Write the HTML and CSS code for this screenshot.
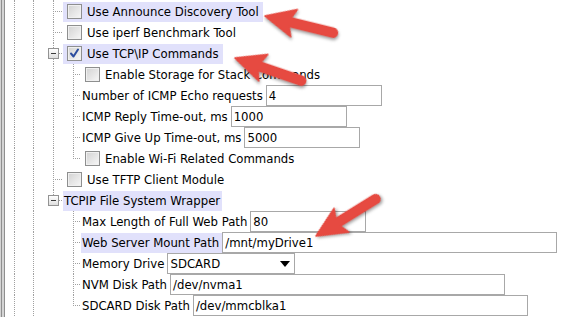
FILE: index.html
```html
<!DOCTYPE html>
<html>
<head>
    <meta charset="UTF-8">
    <title>TCP/IP Configuration</title>
    <link rel="stylesheet" href="styles.css">
</head>
<body>
    <div class="tree">
        <div class="row stub">
            <span class="g g1 pipe"></span><span class="g g2 pipe"></span><span class="g g3 pipe"></span>
        </div>
        <div class="row">
            <span class="g g1 pipe"></span><span class="g g2 pipe"></span><span class="g g3 tee"></span>
            <span class="label check hl"><span class="cb"></span>Use Announce Discovery Tool</span>
        </div>
        <div class="row">
            <span class="g g1 pipe"></span><span class="g g2 pipe"></span><span class="g g3 tee"></span>
            <span class="label check"><span class="cb"></span>Use iperf Benchmark Tool</span>
        </div>
        <div class="row">
            <span class="g g1 pipe"></span><span class="g g2 pipe"></span><span class="g g3 tee"><span class="toggle"></span></span>
            <span class="label check hl"><span class="cb checked"><svg viewBox="0 0 13 13"><path d="M3 6.5 L5.5 9.5 L10 2.5"/></svg></span>Use TCP\IP Commands</span>
        </div>
        <div class="row">
            <span class="g g1 pipe"></span><span class="g g2 pipe"></span><span class="g g3 pipe"></span><span class="g g4 tee"></span>
            <span class="label check"><span class="cb"></span>Enable Storage for Stack Commands</span>
        </div>
        <div class="row">
            <span class="g g1 pipe"></span><span class="g g2 pipe"></span><span class="g g3 pipe"></span><span class="g g4 tee"></span>
            <span class="label">Number of ICMP Echo requests</span><span class="field short">4</span>
        </div>
        <div class="row">
            <span class="g g1 pipe"></span><span class="g g2 pipe"></span><span class="g g3 pipe"></span><span class="g g4 tee"></span>
            <span class="label">ICMP Reply Time-out, ms</span><span class="field short">1000</span>
        </div>
        <div class="row">
            <span class="g g1 pipe"></span><span class="g g2 pipe"></span><span class="g g3 pipe"></span><span class="g g4 tee"></span>
            <span class="label">ICMP Give Up Time-out, ms</span><span class="field short">5000</span>
        </div>
        <div class="row">
            <span class="g g1 pipe"></span><span class="g g2 pipe"></span><span class="g g3 pipe"></span><span class="g g4 elbow"></span>
            <span class="label check"><span class="cb"></span>Enable Wi-Fi Related Commands</span>
        </div>
        <div class="row">
            <span class="g g1 pipe"></span><span class="g g2 pipe"></span><span class="g g3 tee"></span>
            <span class="label check"><span class="cb"></span>Use TFTP Client Module</span>
        </div>
        <div class="row">
            <span class="g g1 pipe"></span><span class="g g2 pipe"></span><span class="g g3 elbow"><span class="toggle"></span></span>
            <span class="label group hl">TCPIP File System Wrapper</span>
        </div>
        <div class="row">
            <span class="g g1 pipe"></span><span class="g g2 pipe"></span><span class="g g3"></span><span class="g g4 tee"></span>
            <span class="label">Max Length of Full Web Path</span><span class="field short">80</span>
        </div>
        <div class="row">
            <span class="g g1 pipe"></span><span class="g g2 pipe"></span><span class="g g3"></span><span class="g g4 tee"></span>
            <span class="label hl">Web Server Mount Path</span><span class="field long">/mnt/myDrive1</span>
        </div>
        <div class="row">
            <span class="g g1 pipe"></span><span class="g g2 pipe"></span><span class="g g3"></span><span class="g g4 tee"></span>
            <span class="label">Memory Drive</span><span class="field select">SDCARD<span class="caret"></span></span>
        </div>
        <div class="row">
            <span class="g g1 pipe"></span><span class="g g2 pipe"></span><span class="g g3"></span><span class="g g4 tee"></span>
            <span class="label">NVM Disk Path</span><span class="field long">/dev/nvma1</span>
        </div>
        <div class="row">
            <span class="g g1 pipe"></span><span class="g g2 pipe"></span><span class="g g3"></span><span class="g g4 elbow"></span>
            <span class="label">SDCARD Disk Path</span><span class="field long">/dev/mmcblka1</span>
        </div>
    </div>

    <!-- callout arrows drawn over the tree -->
    <svg class="arrows" viewBox="0 0 565 317">
        <g transform="translate(265,16) rotate(13.8)"><path d="M0,0 L30,-14 L26,-4.5 L70,-4.5 A4.5,4.5 0 0 1 70,4.5 L26,4.5 L30,14 Z"/></g>
        <g transform="translate(235,58) rotate(18.9)"><path d="M0,0 L30,-14 L26,-4.5 L70,-4.5 A4.5,4.5 0 0 1 70,4.5 L26,4.5 L30,14 Z"/></g>
        <g transform="translate(316,236) rotate(-31.8)"><path d="M0,0 L30,-14 L26,-4.5 L70,-4.5 A4.5,4.5 0 0 1 70,4.5 L26,4.5 L30,14 Z"/></g>
    </svg>
</body>
</html>
```

FILE: styles.css
```css
html, body {
    margin: 0;
    height: 100%;
}
body {
    position: relative;
    width: 565px;
    height: 317px;
    overflow: hidden;
    background: linear-gradient(to right, #d4d4d4 0 1px, #8f8f8f 1px 2px, #d4d4d4 2px 4px, #8f8f8f 4px 5px, #fff 5px);
    font-family: "DejaVu Sans Condensed", "DejaVu Sans", sans-serif;
    font-size: 13px;
    color: #000;
}
.tree {
    padding-left: 5px;
}
.row {
    display: flex;
    align-items: center;
    height: 21px;
    white-space: nowrap;
}
.row.stub {
    height: 1px;
}
.g {
    position: relative;
    flex: none;
    align-self: stretch;
    display: flex;
    align-items: center;
}
.g1 { width: 19px; --x: 9px; }
.g2 { width: 19px; --x: 9px; }
.g3 { width: 20px; --x: 10px; }
.g4 { width: 18px; --x: 10px; }

/* dotted tree lines */
.pipe::before,
.tee::before,
.elbow::before {
    content: "";
    position: absolute;
    left: var(--x);
    top: 0;
    bottom: 0;
    width: 1px;
    background: repeating-linear-gradient(to bottom, #a0a0a0 0 1px, transparent 1px 2px);
}
.elbow::before {
    bottom: auto;
    height: 11px;
}
.tee::after,
.elbow::after {
    content: "";
    position: absolute;
    left: var(--x);
    right: 0;
    top: 10px;
    height: 1px;
    background: repeating-linear-gradient(to right, #a0a0a0 0 1px, transparent 1px 2px);
}
.toggle {
    position: relative;
    z-index: 1;
    box-sizing: border-box;
    width: 11px;
    height: 11px;
    margin-left: 5px;
    margin-top: -1px;
    border: 1px solid #939393;
    background: linear-gradient(#ffffff, #dedede);
}
.toggle::before {
    content: "";
    position: absolute;
    left: 2px;
    top: 4px;
    width: 5px;
    height: 1px;
    background: #3a3a3a;
}

.label {
    display: flex;
    align-items: center;
    height: 20px;
    padding: 0 3px 0 1px;
    line-height: 20px;
}
.label.check {
    padding: 0 4px 0 4px;
}
.label.group {
    padding: 0 2px 0 1px;
}
.hl {
    background: #e1e1fb;
}
.cb {
    box-sizing: border-box;
    width: 15px;
    height: 15px;
    margin-right: 5px;
    border: 1px solid #8e8f8f;
    background: linear-gradient(135deg, #d2d2d2, #f7f7f7);
    box-shadow: inset 0 0 0 1px #f0f0f0;
    flex: none;
}
.cb svg {
    display: block;
    width: 13px;
    height: 13px;
}
.cb path {
    fill: none;
    stroke: #2b4c9e;
    stroke-width: 2;
    stroke-linecap: round;
    stroke-linejoin: round;
}

.field {
    box-sizing: border-box;
    height: 21px;
    line-height: 19px;
    padding-left: 2px;
    border: 1px solid #a8a8a8;
    background: #fff;
    flex: none;
}
.field.short { width: 116px; }
.field.long { width: 335px; }
.field.select {
    display: flex;
    align-items: center;
    justify-content: space-between;
    width: 128px;
    padding-right: 4px;
}
.caret {
    width: 0;
    height: 0;
    border-left: 5px solid transparent;
    border-right: 5px solid transparent;
    border-top: 6px solid #000;
}

.arrows {
    position: absolute;
    top: 0;
    left: 0;
    width: 565px;
    height: 317px;
    pointer-events: none;
}
.arrows path {
    fill: #e64a41;
    stroke: #e64a41;
    stroke-width: 1.5;
    stroke-linejoin: round;
}
.arrows g {
    filter: drop-shadow(1px 2px 1.5px rgba(0, 0, 0, 0.35));
}
```
